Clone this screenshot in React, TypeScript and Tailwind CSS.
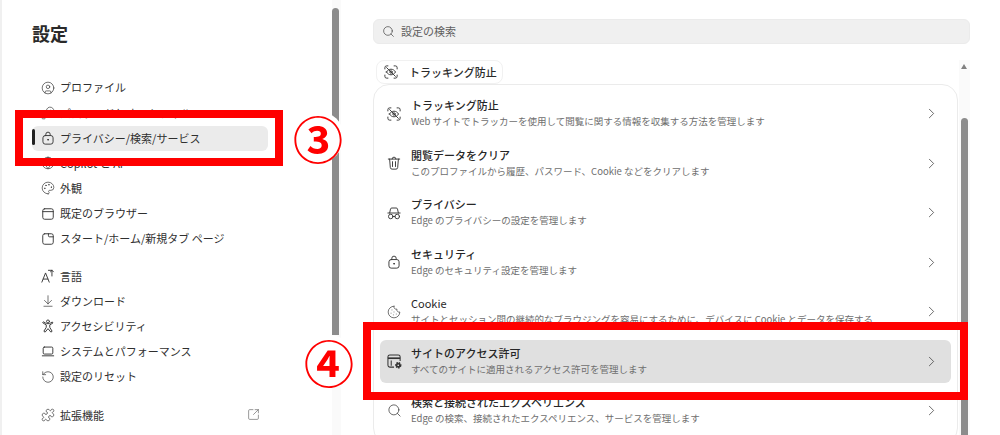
import React from "react";
import { CircleUser, KeyRound, Globe, Palette, ArrowDownToLine, RotateCcw, Puzzle, SquareArrowOutUpRight, Search, Cookie, ChevronRight } from "lucide-react";

const font = { fontFamily: '"Noto Sans CJK JP", "Noto Sans", sans-serif' };

function G({ size = 14, children }: { size?: number; children: React.ReactNode }) {
  return (
    <svg width={size} height={size} viewBox="0 0 16 16" fill="none" stroke="#3a3a3a" strokeWidth="1.100" strokeLinecap="round" strokeLinejoin="round">
      {children}
    </svg>
  );
}

function Tracking({ size = 14 }: { size?: number }) {
  return (
    <G size={size}>
      <path d="M1 4.500V3a2 2 0 0 1 2-2h1.500M11.500 1H13a2 2 0 0 1 2 2v1.500M15 11.500V13a2 2 0 0 1-2 2h-1.500M4.500 15H3a2 2 0 0 1-2-2v-1.500" />
      <path d="M2.800 8c1.200-2 3-3.200 5.200-3.200S12 6 13.200 8c-1.200 2-3 3.200-5.200 3.200S4 10 2.800 8Z" />
      <circle cx="8" cy="8" r="1.400" />
      <path d="M3 3l10 10" />
    </G>
  );
}
const LockIcon = ({ size = 14 }: { size?: number }) => (
  <G size={size}>
    <path d="M5.500 5.200V3.800a2.500 2.500 0 0 1 5 0v1.400" />
    <rect x="2.200" y="5.200" width="11.600" height="9.800" rx="2.600" />
    <circle cx="8" cy="10" r="0.500" fill="#3a3a3a" />
  </G>
);
const TrashIcon = () => (
  <G>
    <path d="M1.500 3.500h13M5.800 3.500a2.200 2.200 0 0 1 4.400 0" />
    <path d="M3 3.500l.8 9.700A2 2 0 0 0 5.800 15h4.400a2 2 0 0 0 2-1.800l.8-9.700" />
    <path d="M6.300 6.500v5.500M9.700 6.500v5.500" />
  </G>
);
const PrivacyIcon = () => (
  <G>
    <path d="M1 8h14M3 8l1-4.500A1.500 1.500 0 0 1 5.500 2.300h5A1.500 1.500 0 0 1 12 3.500L13 8" />
    <circle cx="4.300" cy="12" r="2.600" />
    <circle cx="11.700" cy="12" r="2.600" />
    <path d="M6.900 12h2.200" />
  </G>
);
const SitePerm = () => (
  <svg width="15" height="15" viewBox="0 0 16 16" fill="none" stroke="#333" strokeWidth="1.100">
    <path d="M7.500 14H3a2 2 0 0 1-2-2V3a2 2 0 0 1 2-2h9a2 2 0 0 1 2 2v4.500" />
    <path d="M1 4.500h13" strokeWidth="1.800" />
    <path d="M4.500 7v5.500" />
    <circle cx="12" cy="12" r="2.500" fill="#333" stroke="#333" strokeDasharray="1.500 0.700" strokeWidth="1.800" />
    <circle cx="12" cy="12" r="0.900" fill="#e0e0e0" stroke="none" />
  </svg>
);
const BrowserIcon = () => (
  <G>
    <rect x="2" y="2" width="12" height="12" rx="2.200" />
    <path d="M2 5.300h12" />
  </G>
);
const StartIcon = () => (
  <G>
    <rect x="2" y="2" width="12" height="12" rx="2.200" />
    <path d="M8.500 2v2.300a1.200 1.200 0 0 0 1.200 1.200H14" />
  </G>
);
const LangIcon = () => (
  <G>
    <path d="M1 15 5.200 4.500 9.400 15M2.600 11.500h5.200" />
    <path d="M8.500 1.500h4M12.500 1.500V8M10.800 3.200l1.700-1.700 1.700 1.700" />
  </G>
);
const PersonIcon = () => (
  <G>
    <circle cx="8" cy="2.800" r="1.700" />
    <path d="M2.300 4.500 6 6.800v2.700L3.300 14l1.400 1L8 11l3.300 4 1.400-1L10 9.500V6.800l3.700-2.300-.8-1.100L9.800 5.300H6.200L3.100 3.400Z" />
  </G>
);
const LaptopIcon = () => (
  <G>
    <rect x="2.500" y="3.500" width="11" height="8" rx="1.300" />
    <path d="M1.500 13.500h13" />
  </G>
);

const ic = { size: 14, strokeWidth: 1.200, color: "#3a3a3a" };

type Nav = { icon: React.ReactNode; label: string; mt?: string; active?: boolean; ext?: boolean };
const nav: Nav[] = [
  { icon: <CircleUser {...ic} />, label: "プロファイル" },
  { icon: <KeyRound {...ic} />, label: "パスワードとオートフィル" },
  { icon: <LockIcon />, label: "プライバシー/検索/サービス", active: true },
  { icon: <Globe {...ic} />, label: "Copilot と AI" },
  { icon: <Palette {...ic} />, label: "外観" },
  { icon: <BrowserIcon />, label: "既定のブラウザー" },
  { icon: <StartIcon />, label: "スタート/ホーム/新規タブ ページ" },
  { icon: <LangIcon />, label: "言語", mt: "mt-[12px]" },
  { icon: <ArrowDownToLine {...ic} />, label: "ダウンロード" },
  { icon: <PersonIcon />, label: "アクセシビリティ" },
  { icon: <LaptopIcon />, label: "システムとパフォーマンス" },
  { icon: <RotateCcw {...ic} />, label: "設定のリセット" },
  { icon: <Puzzle {...ic} />, label: "拡張機能", mt: "mt-[13px]", ext: true },
];

type Row = { icon: React.ReactNode; title: string; sub: string; hl?: boolean; light?: boolean };
const rows: Row[] = [
  { icon: <Tracking />, title: "トラッキング防止", sub: "Web サイトでトラッカーを使用して閲覧に関する情報を収集する方法を管理します" },
  { icon: <TrashIcon />, title: "閲覧データをクリア", sub: "このプロファイルから履歴、パスワード、Cookie などをクリアします" },
  { icon: <PrivacyIcon />, title: "プライバシー", sub: "Edge のプライバシーの設定を管理します" },
  { icon: <LockIcon />, title: "セキュリティ", sub: "Edge のセキュリティ設定を管理します" },
  { icon: <Cookie size={14} strokeWidth={1.200} color="#3a3a3a" />, title: "Cookie", sub: "サイトとセッション間の継続的なブラウジングを容易にするために、デバイスに Cookie とデータを保存する", light: true },
  { icon: <SitePerm />, title: "サイトのアクセス許可", sub: "すべてのサイトに適用されるアクセス許可を管理します", hl: true },
  { icon: <Search size={15} strokeWidth={1.200} color="#3a3a3a" />, title: "検索と接続されたエクスペリエンス", sub: "Edge の検索、接続されたエクスペリエンス、サービスを管理します" },
];

export default function App() {
  return (
    <div className="relative flex h-[435px] w-[1000px] overflow-hidden bg-white text-[#2b2b2b]" style={font}>
      <aside className="h-full w-[332px] shrink-0 border-l-2 border-[#f0f0f0] pl-[30px] pr-[64px]">
        <h1 className="mt-[20px] text-[18px] leading-[26px] font-bold text-[#2a2a2a]">設定</h1>
        <nav className="mt-[29px] flex flex-col">
          {nav.map((n) => (
            <div key={n.label} className={`relative flex h-[25.200px] items-center ${n.mt ?? ""}`}>
              {n.active && (
                <>
                  <span className="absolute top-[1px] bottom-[0px] left-0 w-full rounded-md bg-[#ebebeb]" />
                  <span className="absolute top-[4px] left-0 h-[16px] w-[2.500px] rounded bg-[#222]" />
                </>
              )}
              <span className="relative ml-[9px] flex w-[19px] justify-start">{n.icon}</span>
              <span className="relative text-[11px] whitespace-nowrap text-[#2f2f2f]">{n.label}</span>
              {n.ext && <SquareArrowOutUpRight className="absolute right-[8px]" size={13} strokeWidth={1.100} color="#555" />}
            </div>
          ))}
        </nav>
      </aside>

      <div className="relative h-full w-[9px] shrink-0 bg-[#fafafa]">
        <span className="absolute top-[8px] left-0 h-[327px] w-[7px] rounded-t-full bg-[#8c8c8c]" />
      </div>

      <main className="h-full flex-1 pt-[19px] pr-[30px] pl-[32px]">
        <div className="flex h-[25px] items-center gap-[6px] rounded-md border border-[#ebebeb] bg-[#f0f0f0] pl-[8px] text-[11px] text-[#5f5f5f]">
          <Search size={13} strokeWidth={1.300} color="#444" />
          設定の検索
        </div>
        <div className="mt-[16px] flex gap-[1px]">
          <div className="min-w-0 flex-1">
            <div className="ml-[3px] flex h-[24px] w-[127px] items-center gap-[11px] rounded-lg border border-[#f1f1f1] pl-[7px] text-[11px] font-medium">
              <Tracking size={14} />
              トラッキング防止
            </div>
            <div className="h-[360px] rounded-[16px] border border-[#ebebeb] pt-[3.800px]">
              {rows.map((r) => (
                <div key={r.title} className="flex h-[49.500px] items-center">
                  <div className={`mx-[6px] flex h-[43px] flex-1 items-center rounded-md pr-[11px] pl-[7px] ${r.hl ? "bg-[#e0e0e0]" : ""}`}>
                    <span className="flex w-[24px] shrink-0">{r.icon}</span>
                    <div className="min-w-0 flex-1">
                      <div className={`text-[11px] leading-[16px] ${r.light ? "" : "font-medium"} text-[#262626]`}>{r.title}</div>
                      <div className="text-[9.500px] leading-[17px] whitespace-nowrap text-[#6e6e6e]">{r.sub}</div>
                    </div>
                    <ChevronRight size={17} strokeWidth={1} color="#333" />
                  </div>
                </div>
              ))}
            </div>
          </div>
          <div className="relative h-[375px] w-[11px] shrink-0 bg-[#fafafa]">
            <span className="absolute top-[4px] left-[2px] h-0 w-0 border-x-[3.500px] border-b-[5px] border-x-transparent border-b-[#808080]" />
            <span className="absolute top-[58px] left-[2px] h-[320px] w-[7px] rounded-t-full bg-[#8c8c8c]" />
          </div>
        </div>
      </main>

      <div className="absolute top-[110px] left-[15px] h-[56px] w-[268px] border-[8px] border-[#ff0000]" />
      <div className="absolute top-[322px] left-[363px] h-[78px] w-[605px] border-[8px] border-[#ff0000]" />
      <span className="absolute top-[111px] left-[292px] flex h-[52px] w-[52px] items-center justify-center rounded-full bg-white text-[50px] leading-none font-bold text-[#ff0000]">③</span>
      <span className="absolute top-[335px] left-[303px] flex h-[52px] w-[52px] items-center justify-center rounded-full bg-white text-[50px] leading-none font-bold text-[#ff0000]">④</span>
    </div>
  );
}
